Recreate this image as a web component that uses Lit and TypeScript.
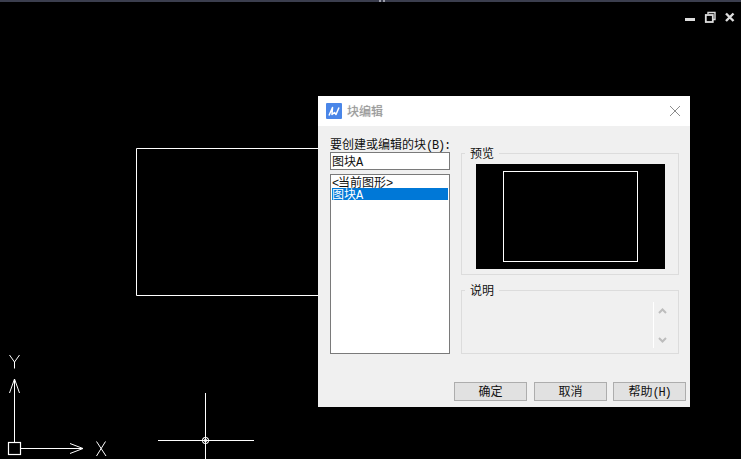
import { LitElement, html, css, svg } from "lit";
import { customElement } from "lit/decorators.js";

@customElement("app-root")
export class AppRoot extends LitElement {
  static styles = css`
    :host {
      display: block;
      width: 741px;
      height: 459px;
      overflow: hidden;
      font-family: "Noto Sans CJK SC", "Liberation Sans", sans-serif;
      font-size: 12px;
    }
    .desktop {
      position: relative;
      width: 741px;
      height: 459px;
      background: #000;
      overflow: hidden;
    }
    .topbar {
      height: 2px;
      background: #3b3e4e;
      display: flex;
      justify-content: center;
      gap: 2px;
      padding-left: 22px;
    }
    .topbar i {
      width: 2px;
      height: 2px;
      background: #9a9ca8;
    }
    .cad {
      position: absolute;
      left: 0;
      top: 0;
    }
    .dialog {
      position: absolute;
      left: 318px;
      top: 96px;
      width: 372px;
      height: 311px;
      background: #f0f0f0;
      color: #111;
      display: flex;
      flex-direction: column;
    }
    .title {
      height: 30px;
      background: #fff;
      display: flex;
      align-items: center;
      padding: 0 9px 0 8px;
      gap: 5px;
      flex: none;
    }
    .title span {
      flex: 1;
      font-size: 12px;
      line-height: 14px;
      color: #9a9a9a;
      text-shadow: 0 0 1px #bbb;
    }
    .main {
      display: flex;
      gap: 11px;
      padding: 12px 0 0 12px;
    }
    .left {
      width: 120px;
      display: flex;
      flex-direction: column;
    }
    .lbl {
      height: 14px;
      line-height: 12px;
      white-space: nowrap;
    }
    .lat {
      font-family: "Liberation Mono", monospace;
      font-size: 12px;
      letter-spacing: -1.2px;
    }
    .input {
      box-sizing: border-box;
      height: 18px;
      background: #fff;
      border: 1px solid #7a7a7a;
      line-height: 16px;
      padding-left: 1px;
    }
    .list {
      box-sizing: border-box;
      height: 180px;
      margin-top: 4px;
      background: #fff;
      border: 1px solid #7a7a7a;
      padding: 1px;
    }
    .item {
      height: 12px;
      line-height: 12px;
      white-space: nowrap;
    }
    .item.sel {
      background: #0078d7;
      color: #fff;
    }
    .right {
      width: 218px;
      margin-top: 15px;
      display: flex;
      flex-direction: column;
      gap: 15px;
    }
    .group {
      position: relative;
      box-sizing: border-box;
      border: 1px solid #dcdcdc;
    }
    .group.preview {
      height: 122px;
      padding: 10px 13px 0 14px;
    }
    .group.desc {
      height: 64px;
      display: flex;
      justify-content: flex-end;
      padding: 11px 0 5px;
    }
    .legend {
      position: absolute;
      left: 3px;
      top: -8px;
      padding: 0 5px;
      background: #f0f0f0;
      line-height: 13px;
    }
    .screen {
      box-sizing: border-box;
      height: 105px;
      background: #000;
      padding: 7px 27px;
    }
    .screen div {
      box-sizing: border-box;
      height: 91px;
      border: 1px solid #fff;
    }
    .scroll {
      width: 25px;
      border-left: 1px solid #fff;
      display: flex;
      flex-direction: column;
      justify-content: space-between;
      align-items: center;
      padding: 6px 8px 5px 0;
      box-sizing: border-box;
    }
    .buttons {
      display: flex;
      justify-content: flex-end;
      gap: 6px;
      margin-top: 28px;
      padding-right: 4px;
    }
    .btn {
      box-sizing: border-box;
      width: 73px;
      height: 19px;
      background: #e1e1e1;
      border: 1px solid #adadad;
      font: inherit;
      color: #111;
      line-height: 15px;
      padding: 0 0 2px;
      text-align: center;
    }
    .btn.first {
      margin-right: 1px;
    }
  `;

  private cad() {
    return svg`
      <svg class="cad" width="741" height="459" viewBox="0 0 741 459" fill="none" stroke="#fff" stroke-width="1">
        <path d="M318 148.5H136.5V295.5H318" />
        <path d="M14.5 379V442M14.5 379L9.5 393M14.5 379L19.5 393" />
        <path d="M9.5 355L14.5 362V368.5M19.5 355L14.5 362" />
        <rect x="8.5" y="442.5" width="12" height="12" stroke-width="1.2"/>
        <path d="M21 448.5H83M83 448.5L70 443.5M83 448.5L70 453.5" />
        <path d="M96.5 441.5L106 456M105.5 441.5L96.5 456" />
        <path d="M158 440.5H254M205.5 393V459" />
        <circle cx="205.5" cy="440.5" r="3.2" />
        <path d="M203 438L208 443M208 438L203 443" stroke-width=".7" />
        <path d="M685 19.5H695" stroke="#ddd" stroke-width="3" />
        <path d="M708 14V12.5H715V19.5H713" stroke="#ddd" stroke-width="1.4" />
        <rect x="705.8" y="15" width="7" height="7" stroke="#ddd" stroke-width="1.8" />
        <path d="M726 13.5L733.5 21M733.5 13.5L726 21" stroke="#ddd" stroke-width="2.4" />
      </svg>
    `;
  }

  render() {
    return html`
      <div class="desktop">
        <div class="topbar"><i></i><i></i></div>
        ${this.cad()}
        <div class="dialog">
          <div class="title">
            <svg width="16" height="16" viewBox="0 0 16 16">
              <rect width="16" height="16" rx="1" fill="#4a86e8" />
              <path d="M3 12.5L6.5 4.5L6 11.5L8.5 9.5L10 11.5L13 4.5" fill="none" stroke="#fff" stroke-width="1.5" stroke-linejoin="round" />
            </svg>
            <span>块编辑</span>
            <svg width="12" height="12" viewBox="0 0 12 12" fill="none" stroke="#8c8c8c">
              <path d="M1 1L11 11M11 1L1 11" />
            </svg>
          </div>
          <div class="main">
            <div class="left">
              <div class="lbl">要创建或编辑的块<span class="lat">(B):</span></div>
              <div class="input">图块<span class="lat">A</span></div>
              <div class="list">
                <div class="item"><span class="lat">&lt;</span>当前图形<span class="lat">&gt;</span></div>
                <div class="item sel">图块<span class="lat">A</span></div>
              </div>
            </div>
            <div class="right">
              <div class="group preview">
                <div class="legend">预览</div>
                <div class="screen"><div></div></div>
              </div>
              <div class="group desc">
                <div class="legend">说明</div>
                <div class="scroll">
                  <svg width="9" height="6" viewBox="0 0 9 6" fill="none" stroke="#bdbdbd" stroke-width="2"><path d="M1 5L4.5 1.5L8 5" /></svg>
                  <svg width="9" height="6" viewBox="0 0 9 6" fill="none" stroke="#bdbdbd" stroke-width="2"><path d="M1 1L4.5 4.5L8 1" /></svg>
                </div>
              </div>
            </div>
          </div>
          <div class="buttons">
            <button class="btn first">确定</button>
            <button class="btn">取消</button>
            <button class="btn">帮助<span class="lat">(H)</span></button>
          </div>
        </div>
      </div>
    `;
  }
}
